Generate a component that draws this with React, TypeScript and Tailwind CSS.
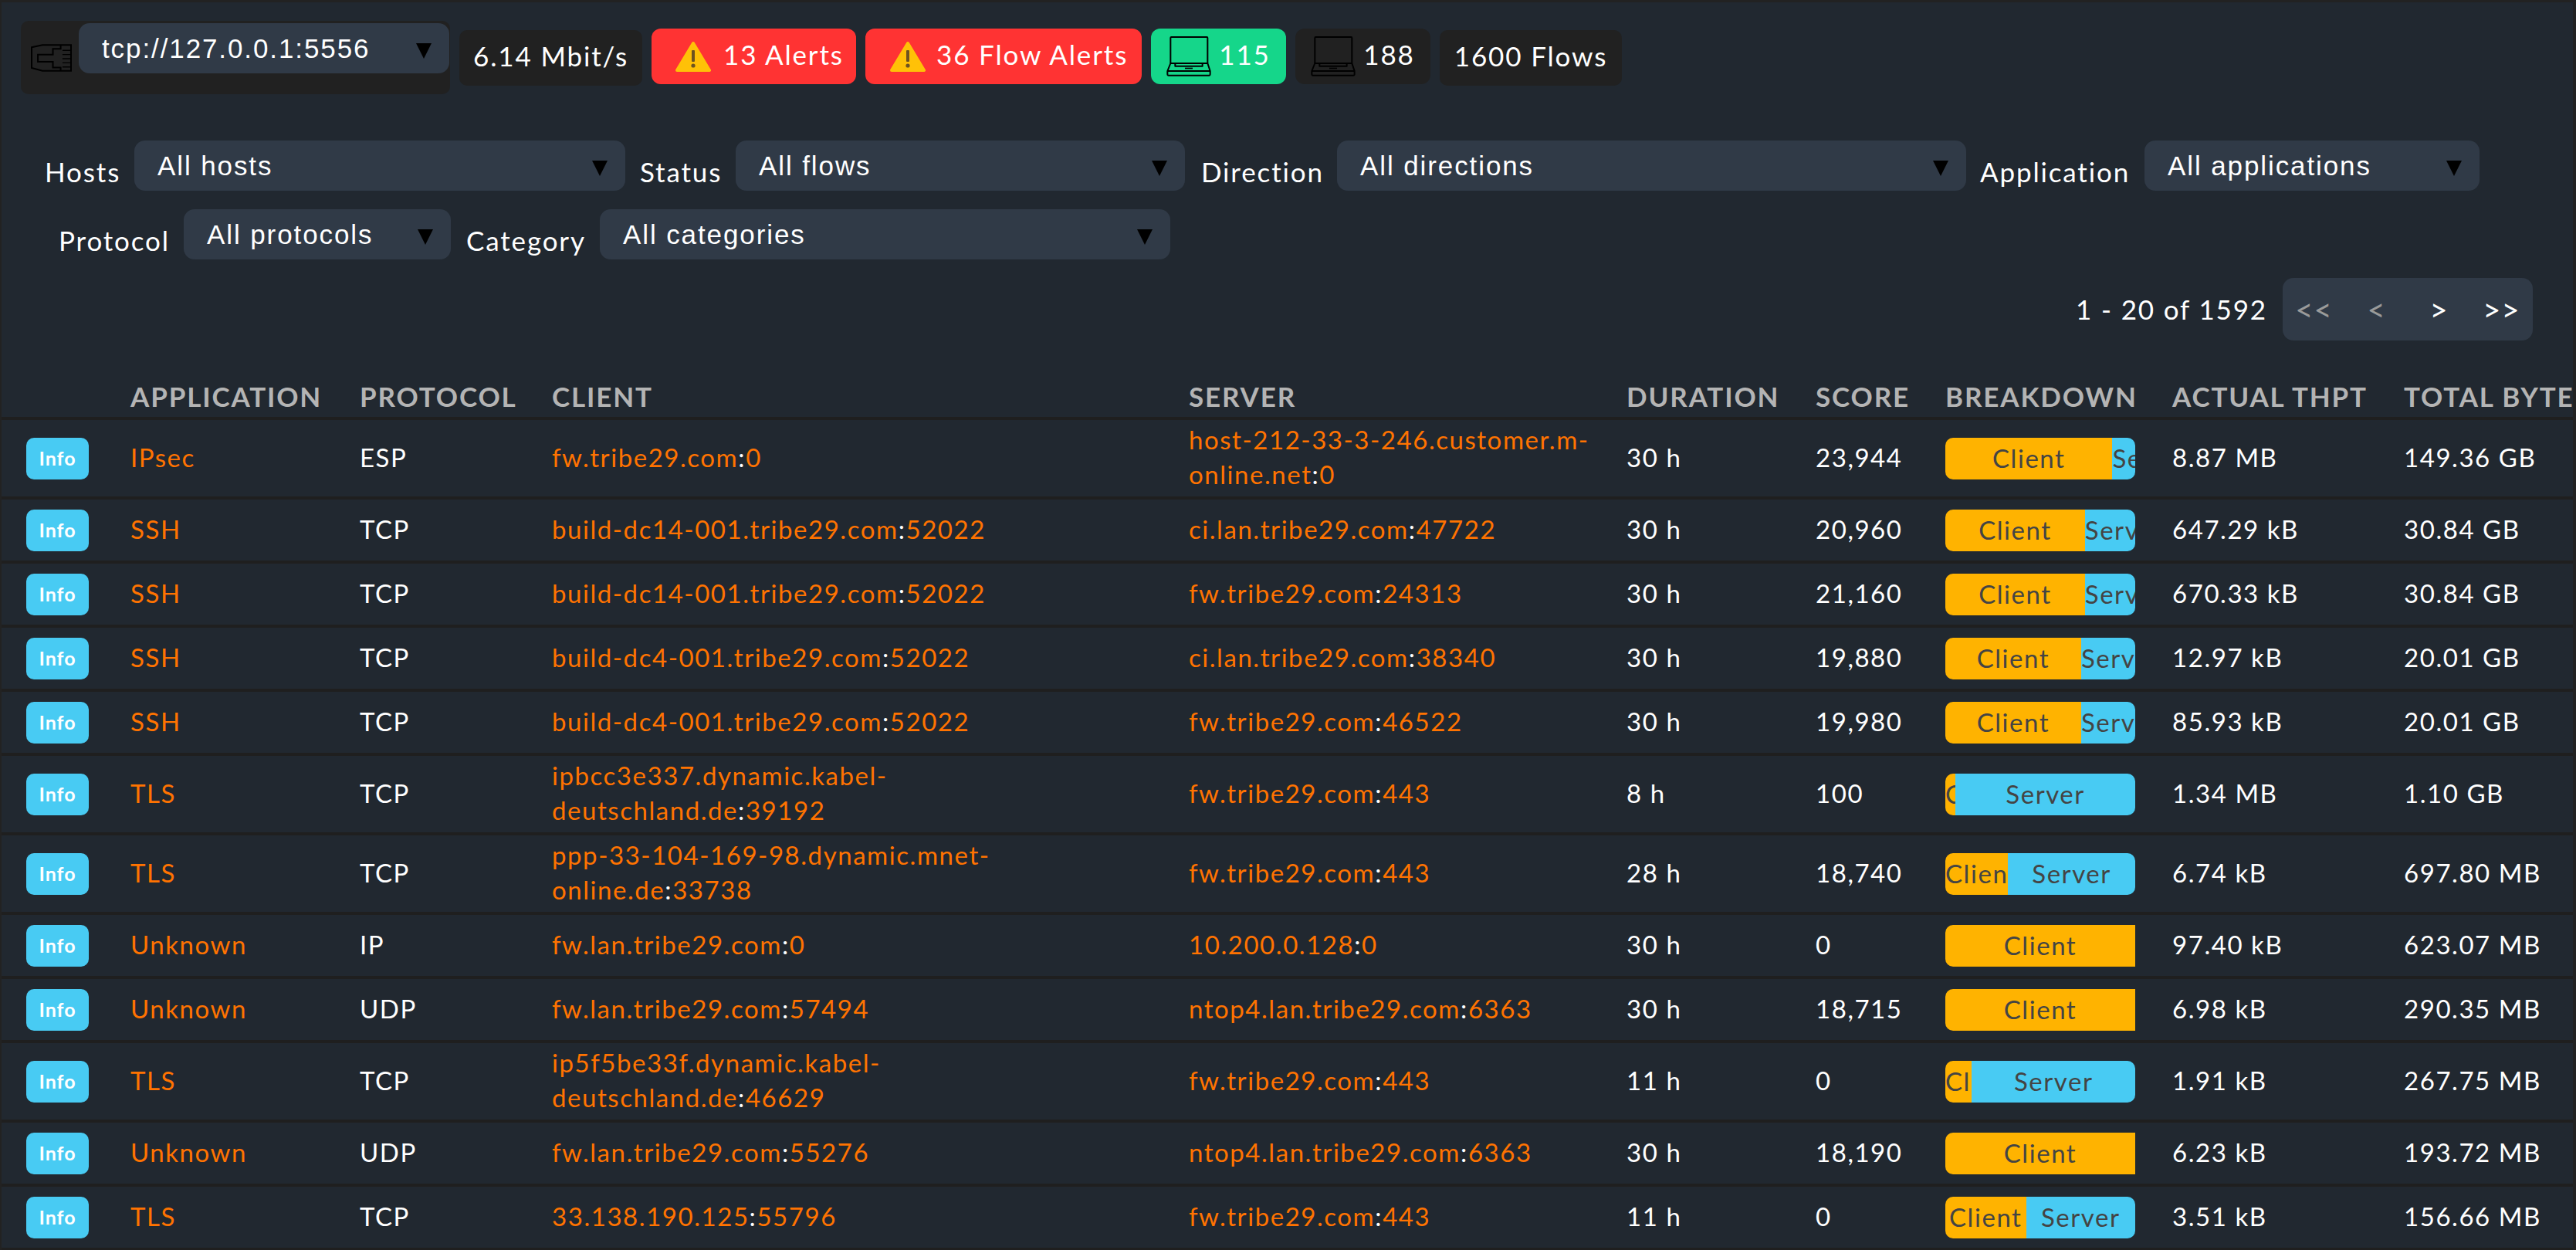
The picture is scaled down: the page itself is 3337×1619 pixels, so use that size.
type Row = {
  app: string;
  proto: string;
  client: [string, string];
  server: [string, string];
  duration: string;
  score: string;
  clientPct: number;
  thpt: string;
  total: string;
};

const rows: Row[] = [
  { app: "IPsec", proto: "ESP", client: ["fw.tribe29.com", "0"], server: ["host-212-33-3-246.customer.m-online.net", "0"], duration: "30 h", score: "23,944", clientPct: 88, thpt: "8.87 MB", total: "149.36 GB" },
  { app: "SSH", proto: "TCP", client: ["build-dc14-001.tribe29.com", "52022"], server: ["ci.lan.tribe29.com", "47722"], duration: "30 h", score: "20,960", clientPct: 73.5, thpt: "647.29 kB", total: "30.84 GB" },
  { app: "SSH", proto: "TCP", client: ["build-dc14-001.tribe29.com", "52022"], server: ["fw.tribe29.com", "24313"], duration: "30 h", score: "21,160", clientPct: 73.5, thpt: "670.33 kB", total: "30.84 GB" },
  { app: "SSH", proto: "TCP", client: ["build-dc4-001.tribe29.com", "52022"], server: ["ci.lan.tribe29.com", "38340"], duration: "30 h", score: "19,880", clientPct: 71.5, thpt: "12.97 kB", total: "20.01 GB" },
  { app: "SSH", proto: "TCP", client: ["build-dc4-001.tribe29.com", "52022"], server: ["fw.tribe29.com", "46522"], duration: "30 h", score: "19,980", clientPct: 71.5, thpt: "85.93 kB", total: "20.01 GB" },
  { app: "TLS", proto: "TCP", client: ["ipbcc3e337.dynamic.kabel-deutschland.de", "39192"], server: ["fw.tribe29.com", "443"], duration: "8 h", score: "100", clientPct: 5.4, thpt: "1.34 MB", total: "1.10 GB" },
  { app: "TLS", proto: "TCP", client: ["ppp-33-104-169-98.dynamic.mnet-online.de", "33738"], server: ["fw.tribe29.com", "443"], duration: "28 h", score: "18,740", clientPct: 33, thpt: "6.74 kB", total: "697.80 MB" },
  { app: "Unknown", proto: "IP", client: ["fw.lan.tribe29.com", "0"], server: ["10.200.0.128", "0"], duration: "30 h", score: "0", clientPct: 100, thpt: "97.40 kB", total: "623.07 MB" },
  { app: "Unknown", proto: "UDP", client: ["fw.lan.tribe29.com", "57494"], server: ["ntop4.lan.tribe29.com", "6363"], duration: "30 h", score: "18,715", clientPct: 100, thpt: "6.98 kB", total: "290.35 MB" },
  { app: "TLS", proto: "TCP", client: ["ip5f5be33f.dynamic.kabel-deutschland.de", "46629"], server: ["fw.tribe29.com", "443"], duration: "11 h", score: "0", clientPct: 14, thpt: "1.91 kB", total: "267.75 MB" },
  { app: "Unknown", proto: "UDP", client: ["fw.lan.tribe29.com", "55276"], server: ["ntop4.lan.tribe29.com", "6363"], duration: "30 h", score: "18,190", clientPct: 100, thpt: "6.23 kB", total: "193.72 MB" },
  { app: "TLS", proto: "TCP", client: ["33.138.190.125", "55796"], server: ["fw.tribe29.com", "443"], duration: "11 h", score: "0", clientPct: 42.5, thpt: "3.51 kB", total: "156.66 MB" },
];

function WarningIcon() {
  return (
    <svg viewBox="0 0 46 41" className="w-[46px] h-[41px] shrink-0">
      <path d="M23 3 L44 38 H2 Z" fill="#ffc107" stroke="#ffc107" strokeWidth="4" strokeLinejoin="round" />
      <rect x="21" y="12" width="4" height="15" rx="1" fill="#6d5320" />
      <circle cx="23" cy="32" r="2.6" fill="#6d5320" />
    </svg>
  );
}

function LaptopIcon() {
  return (
    <svg viewBox="0 0 174 156" className="w-[58px] h-[52px] shrink-0" fill="none" stroke="#000" strokeWidth="6" strokeLinejoin="round">
      <path d="M16 105 V6 a3 3 0 0 1 3-3 H157 a3 3 0 0 1 3 3 V105" />
      <path d="M16 105 H160 L170 135 V148 a4 4 0 0 1 -4 4 H8 a4 4 0 0 1 -4-4 V135 Z" />
      <path d="M34 105 V116 H140 V105" />
      <path d="M4 135 H170" />
      <rect x="72" y="122" width="30" height="5" fill="#000" stroke="none" />
    </svg>
  );
}

function EthernetIcon() {
  return (
    <svg viewBox="0 0 158 106" className="w-[53px] h-[36px] shrink-0" fill="none" stroke="#000" strokeWidth="6">
      <path d="M3 12 L45 3 H155 V103 H45 L3 92 Z" />
      <path d="M115 3 V18 H85 V40 H27 V68 H85 V90 H115 V103" />
      <path d="M122 24 H152 M122 40 H152 M122 56 H152 M122 72 H152 M122 88 H152" strokeWidth="4" />
    </svg>
  );
}

function Caret() {
  return <span className="w-0 h-0 shrink-0 mt-[6px] border-x-[10.5px] border-x-transparent border-t-[20px] border-t-black" />;
}

function Select({ label, w }: { label: string; w: string }) {
  return (
    <div className={`${w} h-[65px] shrink-0 flex items-center justify-between rounded-[14px] bg-[#303a47] pl-[30px] pr-[23px] font-['Liberation_Sans',sans-serif] text-[35px] tracking-[1.9px] text-white`}>
      <span className="pt-[2px]">{label}</span>
      <Caret />
    </div>
  );
}

function Filter({ label, select, w, labelClass }: { label: string; select: string; w: string; labelClass: string }) {
  return (
    <>
      <span className={`${labelClass} shrink-0 pt-[20px] leading-[40px] whitespace-nowrap`}>{label}</span>
      <Select label={select} w={w} />
    </>
  );
}

function Endpoint({ value, wrapClass }: { value: [string, string]; wrapClass: string }) {
  return (
    <td className={`${textTd} ${wrapClass}`}>
      <span className="text-[#ff7300]">{value[0]}</span>:<span className="text-[#ff7300]">{value[1]}</span>
    </td>
  );
}

function Breakdown({ pct }: { pct: number }) {
  return (
    <div className="flex w-[246px] h-[54px] overflow-hidden rounded-l-[10px] text-[#444] leading-[52px]">
      <div className="bg-[#ffb300] overflow-hidden whitespace-nowrap text-center" style={{ width: `${pct}%` }}>
        Client
      </div>
      {pct < 100 && (
        <div className="bg-[#48cbf3] overflow-hidden whitespace-nowrap text-center rounded-r-[10px]" style={{ width: `${100 - pct}%` }}>
          Server
        </div>
      )}
    </div>
  );
}

const baseTd = "h-[83px] align-middle leading-[45px] border-b-4 border-[#1f1f1f]";
const textTd = `${baseTd} pt-[3px] pb-[6px] pr-4`;
const thClass = "h-[64px] pt-[6px] pr-2 align-middle text-left font-bold text-[35px] leading-[40px] text-[#b4b4b4] tracking-[1.85px] whitespace-nowrap border-b-4 border-[#1f1f1f]";

export default function App() {
  return (
    <div className="h-[1619px] overflow-hidden bg-[#222222] pt-[3px] pl-[2px] pr-[4px]">
      <div className="h-full bg-[#212830] pt-[24px] font-['Lato',sans-serif] text-[35px] tracking-[1.85px] text-white">
        {/* top bar */}
        <div className="flex items-start pl-[25px] gap-[12px]">
          <div className="w-[556px] h-[95px] shrink-0 rounded-[10px] bg-[#212121] flex items-start gap-[9px] pl-[13px]">
            <div className="pt-[30px]">
              <EthernetIcon />
            </div>
            <div className="pt-[3px]">
              <Select label="tcp://127.0.0.1:5556" w="w-[480px]" />
            </div>
          </div>
          <div className="mt-[12px] h-[72px] w-[237px] rounded-[10px] bg-[#212121] flex items-center justify-center whitespace-nowrap pb-[5px]">6.14 Mbit/s</div>
          <div className="mt-[10px] h-[72px] w-[265px] rounded-[12px] bg-[#ff3333] flex items-center pl-[31px] gap-[16px] whitespace-nowrap">
            <WarningIcon />
            <span className="pb-[6px]">13 Alerts</span>
          </div>
          <div className="mt-[10px] h-[72px] w-[358px] rounded-[12px] bg-[#ff3333] flex items-center pl-[32px] gap-[14px] whitespace-nowrap">
            <WarningIcon />
            <span className="pb-[6px]">36 Flow Alerts</span>
          </div>
          <div className="mt-[10px] h-[72px] w-[175px] rounded-[12px] bg-[#15d68a] flex items-center justify-center gap-[10px]">
            <LaptopIcon />
            <span className="pb-[6px]">115</span>
          </div>
          <div className="mt-[10px] h-[72px] w-[175px] rounded-[12px] bg-[#212121] flex items-center justify-center gap-[10px]">
            <LaptopIcon />
            <span className="pb-[6px]">188</span>
          </div>
          <div className="mt-[12px] h-[72px] w-[236px] rounded-[10px] bg-[#212121] flex items-center justify-center whitespace-nowrap pb-[5px]">1600 Flows</div>
        </div>

        {/* filters */}
        <div className="mt-[60px] flex items-start">
          <Filter label="Hosts" select="All hosts" w="w-[636px]" labelClass="w-[172px] pl-[56px]" />
          <Filter label="Status" select="All flows" w="w-[582px]" labelClass="w-[143px] pl-[19px]" />
          <Filter label="Direction" select="All directions" w="w-[815px]" labelClass="w-[197px] pl-[21px]" />
          <Filter label="Application" select="All applications" w="w-[434px]" labelClass="w-[231px] pl-[18px]" />
        </div>
        <div className="mt-[24px] flex items-start">
          <Filter label="Protocol" select="All protocols" w="w-[346px]" labelClass="w-[236px] pl-[74px]" />
          <Filter label="Category" select="All categories" w="w-[739px]" labelClass="w-[193px] pl-[20px]" />
        </div>

        {/* pager */}
        <div className="mt-[24px] flex items-center justify-end gap-[20px] pr-[52px]">
          <span className="whitespace-nowrap">1 - 20 of 1592</span>
          <div className="w-[324px] h-[81px] rounded-[14px] bg-[#303a47] grid grid-cols-4 place-items-center text-[40px] tracking-[1px]">
            <span className="text-[#9a9a9a]">&lt;&lt;</span>
            <span className="text-[#9a9a9a]">&lt;</span>
            <span>&gt;</span>
            <span>&gt;&gt;</span>
          </div>
        </div>

        {/* flows table */}
        <table className="mt-[39px] w-[3331px] table-fixed border-separate border-spacing-0 text-[33px] tracking-[1.55px]">
          <colgroup>
            <col className="w-[167px]" />
            <col className="w-[297px]" />
            <col className="w-[249px]" />
            <col className="w-[825px]" />
            <col className="w-[567px]" />
            <col className="w-[245px]" />
            <col className="w-[168px]" />
            <col className="w-[294px]" />
            <col className="w-[300px]" />
            <col className="w-[219px]" />
          </colgroup>
          <thead>
            <tr className="uppercase">
              <th className={thClass}></th>
              <th className={thClass}>Application</th>
              <th className={thClass}>Protocol</th>
              <th className={thClass}>Client</th>
              <th className={thClass}>Server</th>
              <th className={thClass}>Duration</th>
              <th className={thClass}>Score</th>
              <th className={thClass}>Breakdown</th>
              <th className={thClass}>Actual Thpt</th>
              <th className={`${thClass} overflow-hidden`}>Total Bytes</th>
            </tr>
          </thead>
          <tbody>
            {rows.map((r, i) => (
              <tr key={i}>
                <td className={`${baseTd} pl-[32px]`}>
                  <button className="w-[81px] h-[54px] rounded-[10px] bg-[#48cbf3] text-[25px] font-bold tracking-[1px] text-white align-middle">Info</button>
                </td>
                <td className={`${textTd} text-[#ff7300]`}>{r.app}</td>
                <td className={textTd}>{r.proto}</td>
                <Endpoint value={r.client} wrapClass="pr-[80px]" />
                <Endpoint value={r.server} wrapClass="pr-4" />
                <td className={textTd}>{r.duration}</td>
                <td className={textTd}>{r.score}</td>
                <td className={baseTd}>
                  <Breakdown pct={r.clientPct} />
                </td>
                <td className={textTd}>{r.thpt}</td>
                <td className={`${textTd} whitespace-nowrap`}>{r.total}</td>
              </tr>
            ))}
          </tbody>
        </table>
      </div>
    </div>
  );
}
